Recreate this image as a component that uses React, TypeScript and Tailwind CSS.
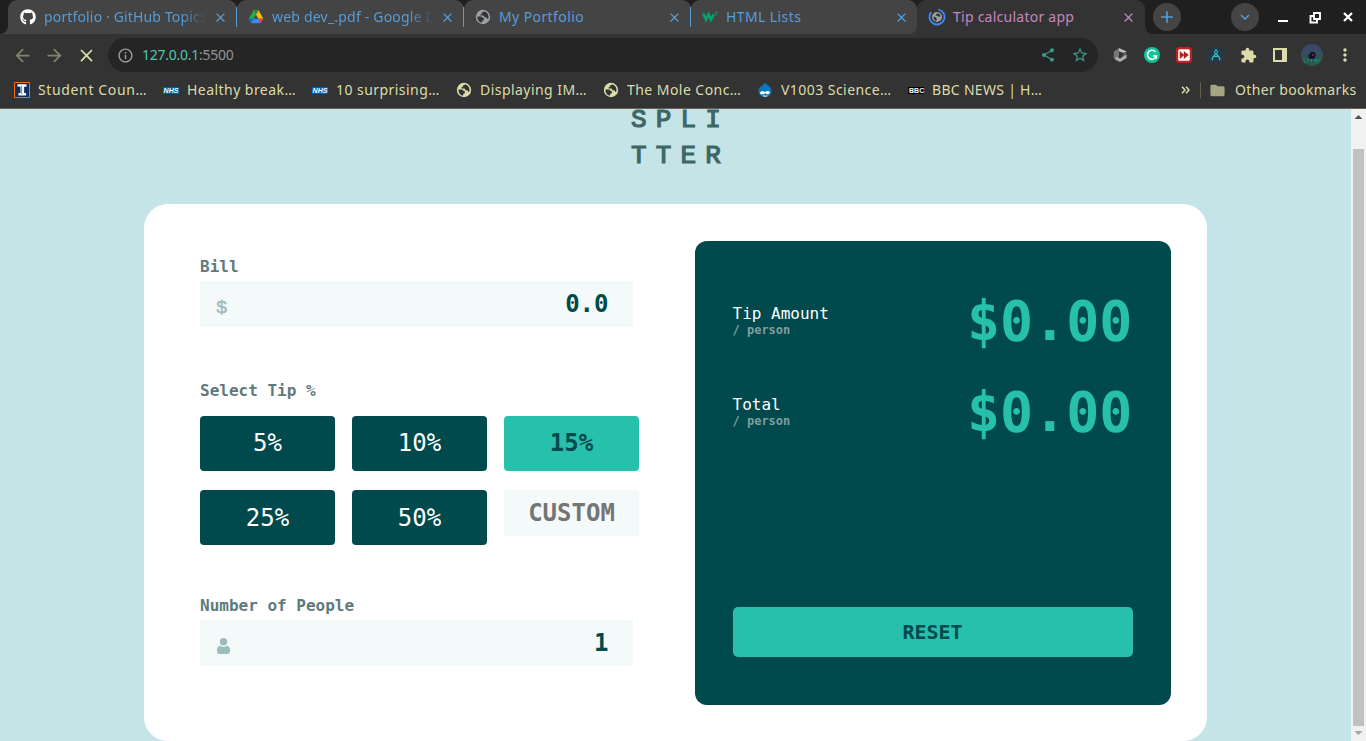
import React from "react";
import { FaGithub } from "react-icons/fa";
import {
  MdArrowBack, MdArrowForward, MdClose, MdInfoOutline, MdShare, MdStarBorder,
  MdExtension, MdMoreVert, MdFolder, MdAdd, MdExpandMore,
} from "react-icons/md";

function Globe({ size = 16 }: { size?: number }) {
  return (
    <svg width={size} height={size} viewBox="0 0 16 16" className="shrink-0">
      <circle cx="8" cy="8" r="7.2" fill="currentColor" />
      <path d="M2.500 7.500H6.300L7.800 9 9 9.200 8.800 11.200 7.300 11.700 7.100 13.600C4.200 13.300 2.300 10.700 2.500 7.500zM9 2.400 6.700 3.700 6.900 5 5.400 5.400 5.500 6.500 8.600 6.600 9.500 8.300 11.700 8.500 12.200 10 13.400 9.600C14.200 6 12.200 3 9 2.400z" fill="#333333" />
    </svg>
  );
}

function DriveIcon() {
  return (
    <svg width="16" height="16" viewBox="0 0 16 16" className="shrink-0">
      <path d="M5.500 1.200h5L8 5.600 3.200 14 .7 9.700z" fill="#22a652" />
      <path d="M5.500 1.200h5L15.400 9.700h-5z" fill="#fbbc05" />
      <path d="M5.500 1.200h5L8 5.600z" fill="#188038" />
      <path d="M.7 9.700h4.700L3.200 14.300z" fill="#1967d2" />
      <path d="M5.400 9.700h5.200l2.300 4.600H3.100z" fill="#4285f4" />
      <path d="M10.500 9.700h4.900l-2.500 4.600z" fill="#ea4335" />
    </svg>
  );
}

function W3Icon() {
  return (
    <svg width="16" height="16" viewBox="0 0 16 16" className="shrink-0" fill="none" stroke="#04a36c">
      <path d="M1.200 4.500 4 10.600 6.500 5.500 9 10.600 11.800 5.500" strokeWidth="2.700" />
      <path d="M13 3.200h2l-1 1.300c1.500 0 1.300 2-.8 1.500" strokeWidth=".9" />
    </svg>
  );
}

function LoadingIcon() {
  return (
    <svg width="18" height="18" viewBox="0 0 18 18" className="shrink-0">
      <circle cx="9" cy="9" r="5" fill="#9aa0a6" />
      <path d="M5.500 8.500l2.500 1 .8 1.600-.6 2c-1.800-.5-2.900-2.600-2.700-4.600zM9.300 5.200 8.300 6.500l-.9 1 2 .2 1.100 1.100 2-.2c0-1.800-1.600-3.300-3.200-3.400z" fill="#333" />
      <path d="M10.500 1.600A7.500 7.500 0 1 1 3.200 4.200" fill="none" stroke="#4285f4" strokeWidth="1.900" />
    </svg>
  );
}

function IllinoisIcon() {
  return (
    <svg width="16" height="16" viewBox="0 0 16 16" className="shrink-0">
      <path d="M.5.500h15v15H.5z" fill="#0b3260" stroke="#ff6a00" />
      <path d="M3.500 2.200h9v2.500h-2.400v6.300h2v2.500H4.500V11h2V4.700h-3z" fill="#fff" />
      <path d="M5 4v1.500M7.600 4v8" stroke="#0b3260" strokeWidth=".6" />
    </svg>
  );
}

function NhsIcon() {
  return (
    <span className="flex h-[7px] w-4 shrink-0 items-center justify-center bg-[#005eb8] font-['Liberation_Sans',sans-serif] text-[7px] font-bold italic leading-none text-white">
      NHS
    </span>
  );
}

function BbcIcon() {
  return (
    <span className="flex h-[7px] w-4 shrink-0 items-center justify-between bg-black px-px font-['Liberation_Sans',sans-serif] text-[7px] font-bold leading-none text-white">
      <span>B</span><span>B</span><span>C</span>
    </span>
  );
}

function DrupalIcon() {
  return (
    <svg width="16" height="16" viewBox="0 0 16 16" className="shrink-0">
      <path d="M8 .8c1 2 6.500 3.400 6.500 8.200a6.500 6.300 0 0 1-13 0C1.500 5 6.500 3.500 8 .8z" fill="#0678be" />
      <path d="M3 11c0-2 3.500-2.500 5-1 1.800-1.500 4.800-1.600 4.800.6 0 2.200-2.800 1.900-4.600.6C6.600 12.600 3 13.200 3 11z" fill="#fff" />
      <path d="M6 13.500c1.500 1 3 1 4.200 0" stroke="#fff" fill="none" />
    </svg>
  );
}

type TabProps = { icon: React.ReactNode; title: string; width: string; text: string; divider?: boolean; fade?: boolean };

function Tab({ icon, title, width, text, divider, fade }: TabProps) {
  return (
    <div className={`relative flex h-[34px] items-center rounded-t-[9px] bg-[#444444] text-[#569cd6] ${width}`}>
      {icon}
      <span
        className={`ml-2 overflow-hidden whitespace-nowrap ${text} ${fade ? "[mask-image:linear-gradient(to_right,black_84%,transparent)]" : ""}`}
      >
        {title}
      </span>
      <MdClose size={15} className="ml-[6px] shrink-0" />
      {divider && <span className="absolute right-0 top-[7px] h-5 w-px bg-[#569cd6]" />}
    </div>
  );
}

function Bookmark({ icon, title, width, spacing }: { icon: React.ReactNode; title: string; width: string; spacing: string }) {
  return (
    <div className="flex items-center gap-2">
      {icon}
      <span className={`whitespace-nowrap ${width} ${spacing}`}>{title}</span>
    </div>
  );
}

function BrowserChrome() {
  return (
    <header className="h-[109px] shrink-0 border-b border-[#6a6150] bg-[#333333] font-['Noto_Sans',sans-serif] text-[14px] leading-5">
      <div className="flex h-[34px]">
        <div className="w-2 bg-[#444444]"><div className="h-full rounded-br-[8px] bg-[#1f1f1f]" /></div>
        <div className="flex bg-[linear-gradient(#1f1f1f_50%,#333333_50%)]">
          <Tab width="w-[229px] pl-3" text="w-[163px] tracking-[0.15px]" icon={<FaGithub size={16} className="shrink-0 text-white" />} title="portfolio · GitHub Topics" divider fade />
          <Tab width="w-[227px] pl-[11px]" text="w-[162px] tracking-[0.2px]" icon={<DriveIcon />} title="web dev_.pdf - Google D" divider fade />
          <Tab width="w-[227px] pl-[11px]" text="w-[162px] tracking-[0.4px]" icon={<span className="text-[#9aa0a6]"><Globe /></span>} title="My Portfolio" divider />
          <Tab width="w-[226px] pl-[11px] rounded-br-[8px]" text="w-[162px] tracking-[0.4px]" icon={<W3Icon />} title="HTML Lists" />
        </div>
        <div className="w-[228px] bg-[#1f1f1f]">
          <div className="flex h-full items-center rounded-t-[9px] bg-[#333333] pl-[11px] text-[#c586c0]">
            <LoadingIcon />
            <span className="ml-[7px] w-[163px] whitespace-nowrap tracking-[0.25px]">Tip calculator app</span>
            <MdClose size={15} className="ml-[5px] shrink-0" />
          </div>
        </div>
        <div className="flex flex-1 items-center rounded-bl-[8px] bg-[#1f1f1f] text-white">
          <span className="ml-[8px] flex size-7 items-center justify-center rounded-full bg-[#444444] text-[#569cd6]"><MdAdd size={20} /></span>
          <span className="ml-[50px] flex size-7 items-center justify-center rounded-full bg-[#444444] text-[#569cd6]"><MdExpandMore size={18} /></span>
          <svg width="90" height="20" viewBox="0 0 90 20" className="ml-[11px]" fill="none" stroke="#fff" strokeWidth="2">
            <path d="M8 14h10" />
            <path d="M44 6h6v6h-6zM43 9h-2.500v6.500H47V13" strokeWidth="1.900" />
            <path d="M74 6l8 8M82 6l-8 8" strokeWidth="2.200" />
          </svg>
        </div>
      </div>

      <div className="flex h-[42px] items-center text-[#dcdcaa]">
        <MdArrowBack size={21} className="ml-[12px] text-[#858468]" />
        <MdArrowForward size={21} className="ml-[11px] text-[#858468]" />
        <MdClose size={21} className="ml-[11px]" />
        <div className="ml-[11px] flex h-[34px] w-[990px] items-center rounded-full bg-[#252525] pl-[9px] pr-[9px]">
          <MdInfoOutline size={17} className="text-[#9aa0a6]" />
          <span className="ml-2 flex-1 tracking-[-0.25px] text-[#939393]"><span className="text-[#4ec9b0]">127.0.0.1</span>:5500</span>
          <MdShare size={16} className="text-[#3f9a87]" />
          <MdStarBorder size={18} className="ml-[15px] text-[#3f9a87]" />
        </div>
        <div className="ml-[14px] flex items-center gap-4">
          <svg width="16" height="16" viewBox="0 0 16 16">
            <path d="M2 4.500 7 1v8L4.500 13 1.500 11z" fill="#777" />
            <path d="M7 1l7.500 3.500L12 6 7 4.500z" fill="#bdbdbd" />
            <path d="M14.500 4.500V11L11.500 12.500 10 9l2-3z" fill="#5c5c5c" />
            <path d="M4.500 9.500 8 11.500l6.500-4V11L8 15 3 12.500z" fill="#adadad" />
          </svg>
          <svg width="16" height="16" viewBox="0 0 16 16">
            <circle cx="8" cy="8" r="8" fill="#15c39a" />
            <path d="M11.400 4.800A4.500 4.500 0 1 0 12.300 9H9M12.300 8.500v3.300" fill="none" stroke="#fff" strokeWidth="1.500" />
          </svg>
          <svg width="16" height="16" viewBox="0 0 16 16">
            <rect width="16" height="16" rx="3" fill="#c0201f" /><rect x="2.200" y="2.200" width="11.600" height="11.600" rx="1.500" fill="#fff" />
            <path d="M4 4.500 8 8l-4 3.500zM8 4.500 12.500 8 8 11.500z" fill="#b71c1c" stroke="#b71c1c" strokeWidth=".5" />
          </svg>
          <svg width="16" height="16" viewBox="0 0 16 16">
            <rect width="16" height="16" rx="3" fill="#263746" />
            <path d="M8 2v2M8 6.500 4.300 11M8 6.500l3.700 4.500M5.500 9.500h5M4.300 11v2.500M11.700 11v2.500" stroke="#2cc5c8" strokeWidth="1.200" fill="none" />
            <circle cx="8" cy="5" r="1.500" fill="none" stroke="#2cc5c8" />
          </svg>
          <MdExtension size={17} />
          <svg width="14" height="14" viewBox="0 0 14 14"><path d="M0 0h14v14H0zM2 2v10h7V2z" fill="currentColor" fillRule="evenodd" /></svg>
          <svg width="22" height="22" viewBox="0 0 22 22" className="-ml-[2px]">
            <defs><linearGradient id="avatar" x1="0" x2="0" y1="0" y2="1"><stop stopColor="#3d4470" /><stop offset="1" stopColor="#295c42" /></linearGradient></defs>
            <circle cx="11" cy="11" r="11" fill="url(#avatar)" />
            <path d="M7 12 10 8h3l2 3-2 4H9z" fill="#11132b" /><path d="M11 11h2" stroke="#b04a4a" />
            <path d="M3 15v3h2M7 15v3M9 15.500h3M10.500 15v3M14 18v-3l2 1-2 1 2 1M18 15v3" stroke="#168c86" fill="none" />
          </svg>
          <MdMoreVert size={20} className="-ml-[4px]" />
        </div>
      </div>

      <div className="flex h-7 items-center pl-[14px] pr-[10px] text-[#dcdcaa]">
        <div className="flex flex-1 gap-4">
          <Bookmark icon={<IllinoisIcon />} title="Student Coun…" width="w-[109px]" spacing="tracking-[0.64px]" />
          <Bookmark icon={<NhsIcon />} title="Healthy break…" width="w-[109px]" spacing="tracking-[0.45px]" />
          <Bookmark icon={<NhsIcon />} title="10 surprising…" width="w-[104px]" spacing="tracking-[0.45px]" />
          <Bookmark icon={<Globe />} title="Displaying IM…" width="w-[107px]" spacing="tracking-[0.45px]" />
          <Bookmark icon={<Globe />} title="The Mole Conc…" width="w-[114px]" spacing="tracking-[0.45px]" />
          <Bookmark icon={<DrupalIcon />} title="V1003 Science…" width="w-[111px]" spacing="tracking-[0.45px]" />
          <Bookmark icon={<BbcIcon />} title="BBC NEWS | H…" width="w-[110px]" spacing="tracking-[0.3px]" />
        </div>
        <svg width="9" height="8" viewBox="0 0 9 8" fill="none" stroke="currentColor" strokeWidth="1.500"><path d="M1 .8 4 4 1 7.200M5 .8 8 4 5 7.200" /></svg>
        <span className="ml-[10px] h-4 w-px bg-[#62614f]" />
        <MdFolder size={17} className="ml-[8px] text-[#a5a583]" />
        <span className="ml-[9px] w-[121px] whitespace-nowrap tracking-[0.38px]">Other bookmarks</span>
      </div>
    </header>
  );
}

function AmountRow({ label }: { label: string }) {
  return (
    <div className="flex h-[91px] justify-between">
      <div className="-ml-[0.5px] pt-[23px]">
        <div className="text-[16px] leading-[19px] text-white">{label}</div>
        <div className="text-[12px] font-bold leading-[14px] text-[#7f9d9f]">/ person</div>
      </div>
      <div className="-mr-px pr-[1.5px] text-[55px] font-bold leading-[80px] text-[#26c0ab]">$0.00</div>
    </div>
  );
}

const tipStyle = "flex h-[55px] items-center justify-center rounded-[4px]";

function Calculator() {
  return (
    <section className="mx-auto flex h-[537px] w-[1063px] rounded-[24px] bg-white font-['DejaVu_Sans_Mono',monospace] text-[#5e7a7d]">
      <div className="w-[551px] pl-14 pt-[53px] text-[16px] font-bold leading-[19px]">
        <div>Bill</div>
        <div className="mt-[5px] flex h-[46px] w-[433px] items-center justify-between bg-[#f4fafa] pl-4 pr-[24.5px]">
          <span className="mt-[9px] font-['Liberation_Mono',monospace] text-[19px] font-normal text-[#9ebbbd] [-webkit-text-stroke:0.5px_#9ebbbd]">$</span>
          <span className="text-[24px] leading-7 text-[#00494d]">0.0</span>
        </div>
        <div className="mt-[54px]">Select Tip %</div>
        <div className="mt-4 grid w-[439px] grid-cols-[135px_135px_135px] gap-x-[17px] gap-y-[19px] text-[24px] font-normal leading-7 text-white">
          <div className={`${tipStyle} bg-[#00494d] pb-px`}>5%</div>
          <div className={`${tipStyle} bg-[#00494d] pb-px`}>10%</div>
          <div className={`${tipStyle} bg-[#26c0ab] pb-px font-bold text-[#00494d]`}>15%</div>
          <div className={`${tipStyle} bg-[#00494d] pt-px`}>25%</div>
          <div className={`${tipStyle} bg-[#00494d] pt-px`}>50%</div>
          <div className="flex h-[46px] items-center justify-center bg-[#f4fafa] font-bold text-[#757575]">CUSTOM</div>
        </div>
        <div className="mt-[51px]">Number of People</div>
        <div className="mt-[5px] flex h-[46px] w-[433px] items-center justify-between bg-[#f4fafa] pl-[17px] pr-[24.5px]">
          <svg width="13" height="16" viewBox="0 0 13 16" className="mt-[6px]" fill="#9ebbbd">
            <circle cx="6.500" cy="3.800" r="3.700" />
            <path d="M3 7.800c2 1.500 5 1.500 7 0 2 .3 3 2 3 4.500v1.200c0 1.500-1 2.500-2.500 2.500h-8C1 16 0 15 0 13.500v-1.200C0 9.800 1 8.100 3 7.800z" />
          </svg>
          <span className="text-[24px] leading-7 text-[#00494d]">1</span>
        </div>
      </div>
      <div className="mt-[37px] flex h-[464px] w-[476px] flex-col rounded-[12px] bg-[#00494d] px-[38px] pb-12 pt-10">
        <AmountRow label="Tip Amount" />
        <AmountRow label="Total" />
        <button className="mt-auto h-[50px] w-full rounded-[5px] bg-[#26c0ab] pr-px text-[20px] font-bold text-[#00494d]">RESET</button>
      </div>
    </section>
  );
}

export default function App() {
  return (
    <div className="flex h-[741px] w-[1366px] flex-col overflow-hidden">
      <BrowserChrome />
      <div className="flex h-[632px]">
        <main className="w-[1351px] bg-[#c5e4e7]">
          <div className="flex h-[95px] flex-col items-center font-['Liberation_Mono',monospace] text-[26px] leading-9 tracking-[9.100px] text-[#3d6666] [-webkit-text-stroke:1.200px_#3d6666]">
            <div className="-mt-[7px] pl-[10px]">SPLI</div>
            <div className="pl-[10px]">TTER</div>
          </div>
          <Calculator />
        </main>
        <aside className="flex w-[15px] flex-col items-center bg-[#f1f1f1]">
          <svg width="15" height="40" viewBox="0 0 15 40"><path d="M3.500 10h8l-4-4z" fill="#505050" /></svg>
          <div className="w-[11px] flex-1 bg-[#c1c1c1]" />
          <svg width="15" height="15" viewBox="0 0 15 15"><path d="M3.500 5h8l-4 4z" fill="#a3a3a3" /></svg>
        </aside>
      </div>
    </div>
  );
}
